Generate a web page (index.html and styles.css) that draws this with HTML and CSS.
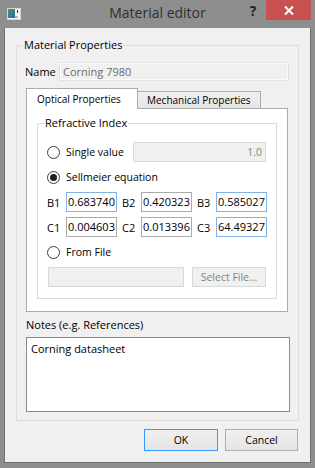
FILE: index.html
```html
<!DOCTYPE html>
<html>
<head>
<meta charset="UTF-8">
<title>Material editor</title>
<link rel="stylesheet" href="styles.css">
</head>
<body>
<div class="window">
  <div class="titlebar">
    <div class="title-left">
      <svg class="app-icon" width="14" height="12" viewBox="0 0 14 12">
        <defs>
          <linearGradient id="iconfill" x1="0" y1="0" x2="1" y2="1">
            <stop offset="0" stop-color="#3f9a6e"/>
            <stop offset="1" stop-color="#3a5fa8"/>
          </linearGradient>
        </defs>
        <rect x="0.5" y="0.5" width="13" height="11" fill="#f6f6f6" stroke="#d4d4d4"/>
        <rect x="1" y="1" width="7" height="9" fill="url(#iconfill)"/>
        <rect x="10" y="2" width="1" height="3" fill="#2a2a2a"/>
        <rect x="8" y="8" width="3" height="2" fill="#b8b8b8"/>
      </svg>
    </div>
    <div class="title">Material editor</div>
    <div class="title-right">
      <div class="help">?</div>
      <div class="close">
        <svg width="10" height="9" viewBox="0 0 10 9">
          <path d="M1 0.5 L9 8.5 M9 0.5 L1 8.5" stroke="#fff" stroke-width="2"/>
        </svg>
      </div>
    </div>
  </div>

  <div class="client">
    <div class="group outer">
      <div class="group-title">Material Properties</div>
      <div class="name-row">
        <span class="name-label">Name</span>
        <div class="field disabled">Corning 7980</div>
      </div>

      <div class="tabs">
        <div class="tab-bar">
          <div class="tab active">Optical Properties</div>
          <div class="tab">Mechanical Properties</div>
        </div>
        <div class="tab-pane">
          <div class="group inner">
            <div class="group-title">Refractive Index</div>

            <div class="row">
              <span class="radio"></span>
              <span class="radio-label wide">Single value</span>
              <div class="field disabled number">1.0</div>
            </div>

            <div class="row">
              <span class="radio checked"></span>
              <span class="radio-label">Sellmeier equation</span>
            </div>

            <div class="coef-grid">
              <span>B1</span><div class="field coef focus">0.683740</div>
              <span class="lbl">B2</span><div class="field coef">0.420323</div>
              <span class="lbl">B3</span><div class="field coef focus">0.585027</div>
            </div>
            <div class="coef-grid">
              <span>C1</span><div class="field coef">0.004603</div>
              <span class="lbl">C2</span><div class="field coef">0.013396</div>
              <span class="lbl">C3</span><div class="field coef focus">64.49327</div>
            </div>

            <div class="row">
              <span class="radio"></span>
              <span class="radio-label">From File</span>
            </div>

            <div class="row file-row">
              <div class="field disabled path"></div>
              <div class="btn small disabled">Select File...</div>
            </div>
          </div>
        </div>
      </div>

      <div class="notes-label">Notes (e.g. References)</div>
      <div class="notes">Corning datasheet</div>
    </div>

    <div class="buttons">
      <div class="btn default">OK</div>
      <div class="btn">Cancel</div>
    </div>
  </div>
</div>
</body>
</html>
```

FILE: styles.css
```css
  body {
    margin: 0;
    padding: 0;
    font-family: "Open Sans", "Noto Sans", sans-serif;
    font-size: 10.5px;
    color: #000;
  }

  .window {
    width: 315px;
    height: 468px;
    background-color: #8e8e8e;
    display: flex;
    flex-direction: column;
  }

  /* title bar */

  .titlebar {
    height: 28px;
    display: grid;
    grid-template-columns: 1fr auto 1fr;
  }

  .title-left {
    padding: 8px 0 0 7px;
  }

  .app-icon {
    display: block;
  }

  .title {
    font-size: 14px;
    line-height: 28px;
    color: #2e2e2e;
    margin-top: -1px;
  }

  .title-right {
    display: flex;
    justify-content: flex-end;
    align-items: flex-start;
    padding-right: 4px;
  }

  .help {
    width: 26px;
    text-align: center;
    font-size: 14px;
    font-weight: bold;
    line-height: 22px;
    color: #222;
  }

  .close {
    width: 45px;
    height: 20px;
    background-color: #c75050;
    display: flex;
    align-items: center;
    justify-content: center;
  }

  /* client area */

  .client {
    flex: 1;
    margin: 0 4px 5px 4px;
    border: 1px solid #707070;
    border-top: none;
    background-color: #f0f0f0;
    display: flex;
    flex-direction: column;
  }

  .group {
    border: 1px solid #dcdcdc;
  }

  .group-title {
    display: table;
    line-height: 16px;
    padding: 0 1px;
    background-color: inherit;
    font-size: 11px;
  }

  .outer {
    margin: 17px 11px 0 11px;
    padding: 0 9px 8px 8px;
    background-color: #f0f0f0;
  }

  .outer > .group-title {
    margin: -9px 0 0 -2px;
  }

  .name-row {
    display: flex;
    align-items: center;
    margin-top: 9px;
    font-size: 11px;
  }

  .name-label {
    width: 34px;
  }

  .field {
    box-sizing: border-box;
    height: 20px;
    line-height: 18px;
    border: 1px solid #ababab;
    background-color: #fff;
    padding: 0 3px;
    white-space: nowrap;
    overflow: hidden;
  }

  .field.disabled {
    background-color: #f0f0f0;
    border-color: #d9d9d9;
    color: #6d6d6d;
  }

  .name-row .field {
    flex: 1;
    height: 19px;
    line-height: 17px;
    border-color: #e2e2e2;
    box-shadow: inset 0 0 0 1px #fbfbfb;
  }

  /* tabs */

  .tabs {
    margin: 7px 1px 0 1px;
  }

  .tab-bar {
    display: flex;
    align-items: flex-end;
  }

  .tab {
    box-sizing: border-box;
    width: 124px;
    height: 17px;
    line-height: 16px;
    padding-left: 9px;
    margin-left: -1px;
    border: 1px solid #acacac;
    border-bottom: none;
    background: linear-gradient(#f0f0f0, #e5e5e5);
    white-space: nowrap;
    font-size: 10px;
  }

  .tab.active {
    width: 112px;
    height: 21px;
    line-height: 20px;
    padding-left: 10px;
    margin-left: 0;
    margin-bottom: -1px;
    background: #fff;
    position: relative;
  }

  .tab-pane {
    border: 1px solid #acacac;
    background-color: #fff;
    padding: 14px 10px 12px 10px;
  }

  .inner {
    padding: 0 9px 11px 9px;
    background-color: #fff;
  }

  .inner > .group-title {
    margin: -9px 0 11px -3px;
  }

  .row {
    display: flex;
    align-items: center;
    height: 20px;
    margin-bottom: 5px;
  }

  .radio {
    box-sizing: border-box;
    width: 13px;
    height: 13px;
    border: 1px solid #3c3c3c;
    border-radius: 50%;
    background-color: #fff;
    display: flex;
    align-items: center;
    justify-content: center;
    margin-right: 6px;
  }

  .radio.checked::after {
    content: "";
    width: 7px;
    height: 7px;
    border-radius: 50%;
    background-color: #1e1e1e;
  }

  .radio-label.wide {
    width: 67px;
  }

  .row .number {
    flex: 1;
    text-align: right;
    margin-right: 1px;
    color: #838383;
  }

  .coef-grid {
    display: grid;
    grid-template-columns: 19px 51px 24px 51px 24px 51px;
    align-items: center;
    height: 20px;
    margin-bottom: 5px;
    font-size: 11px;
  }

  .coef-grid .lbl {
    padding-left: 5px;
  }

  .field.coef {
    padding: 0 1px;
  }

  .field.focus {
    border-color: #7eb4ea;
  }

  .file-row {
    margin: 0 1px 0 1px;
  }

  .file-row .path {
    flex: 1;
    margin-right: 8px;
  }

  /* buttons */

  .btn {
    box-sizing: border-box;
    width: 73px;
    height: 22px;
    line-height: 20px;
    text-align: center;
    border: 1px solid #adadad;
    background: linear-gradient(#f0f0f0, #e5e5e5);
  }

  .btn.small {
    width: 74px;
    height: 20px;
    line-height: 18px;
  }

  .btn.disabled {
    border-color: #d9d9d9;
    background: #f0f0f0;
    color: #838383;
  }

  .btn.default {
    width: 74px;
    border-color: #3399ff;
  }

  .buttons {
    display: flex;
    justify-content: flex-end;
    gap: 7px;
    margin-top: 8px;
    padding-right: 12px;
  }

  /* notes */

  .notes-label {
    margin: 5px 0 4px 1px;
    line-height: 16px;
    font-size: 11px;
  }

  .notes {
    box-sizing: border-box;
    height: 75px;
    margin: 0 -1px 0 1px;
    border: 1px solid #868a93;
    background-color: #fff;
    padding: 3px 4px;
    line-height: 16px;
    font-size: 11px;
  }
```
